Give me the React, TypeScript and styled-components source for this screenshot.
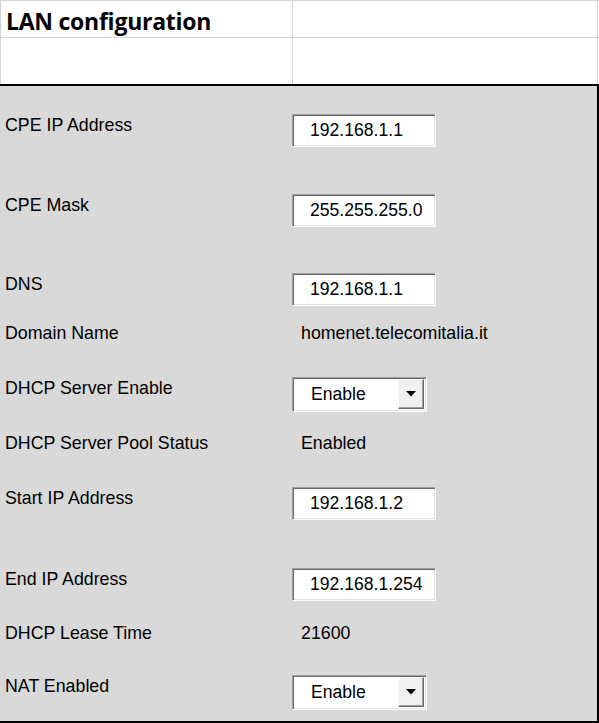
import React from "react";
import styled, { createGlobalStyle } from "styled-components";

const GlobalStyle = createGlobalStyle`
  html, body { margin: 0; padding: 0; background: #ffffff; }
  body { font-family: "Liberation Sans", Arial, sans-serif; }
`;

const Sheet = styled.div`
  width: 599px;
  border-top: 1px solid #d4d4d4;
  box-sizing: border-box;
`;

const HeaderRow = styled.div<{ $h: number; $line?: boolean }>`
  display: grid;
  grid-template-columns: 292px 306px;
  height: ${(p) => p.$h}px;
  box-sizing: border-box;
  border-bottom: ${(p) => (p.$line ? "1px solid #d4d4d4" : "none")};
`;

const HeaderCell = styled.div<{ $first?: boolean }>`
  border-left: 1px solid #d4d4d4;
  border-right: ${(p) => (p.$first ? "none" : "1px solid #d4d4d4")};
  box-sizing: border-box;
  display: flex;
  align-items: flex-end;
  padding-left: 5px;
`;

const Title = styled.h1`
  margin: 0 0 1px 0;
  font-family: "Open Sans", "Liberation Sans", sans-serif;
  font-weight: 700;
  font-size: 23px;
  line-height: 30px;
  color: #000;
  letter-spacing: -0.25px;
`;

const Panel = styled.div`
  background: #d9d9d9;
  border-top: 2px solid #000;
  border-right: 2px solid #000;
  border-bottom: 2px solid #000;
  padding-top: 28px;
  height: 639px;
  box-sizing: border-box;
`;

const FieldRow = styled.div<{ $h: number }>`
  display: grid;
  grid-template-columns: 292px 1fr;
  align-items: start;
  height: ${(p) => p.$h}px;
`;

const Label = styled.div`
  padding: 1px 0 0 5px;
  font-size: 17.8px;
  line-height: 20px;
  color: #000;
  white-space: nowrap;
`;

const Value = styled.div`
  padding: 1px 0 0 9px;
  font-size: 17.8px;
  line-height: 20px;
  color: #000;
  white-space: nowrap;
`;

const TextBox = styled.input`
  display: block;
  width: 144px;
  height: 33px;
  box-sizing: border-box;
  margin: 0;
  padding: 0 0 0 17px;
  background: #fff;
  border-style: solid;
  border-width: 1px;
  border-color: #a0a0a0 #ffffff #ffffff #a0a0a0;
  box-shadow: inset 1px 1px 0 #696969, inset -1px -1px 0 #e3e3e3;
  font-family: "Liberation Sans", Arial, sans-serif;
  font-size: 17.6px;
  color: #000;
  outline: none;
`;

const SelectBox = styled.div`
  display: flex;
  align-items: flex-start;
  width: 135px;
  height: 35px;
  box-sizing: border-box;
  background: #fff;
  border-style: solid;
  border-width: 1px;
  border-color: #a0a0a0 #ffffff #ffffff #a0a0a0;
  box-shadow: inset 1px 1px 0 #696969, inset -1px -1px 0 #e3e3e3;
  padding: 1px 2px 1px 1px;
`;

const SelectText = styled.span`
  flex: 1;
  padding-left: 17px;
  font-size: 17.6px;
  line-height: 31px;
  color: #000;
`;

const ArrowButton = styled.span`
  width: 26px;
  height: 30px;
  box-sizing: border-box;
  background: #f0f0f0;
  border-style: solid;
  border-width: 1px;
  border-color: #ffffff #696969 #696969 #ffffff;
  box-shadow: inset -1px -1px 0 #a0a0a0;
  display: flex;
  align-items: center;
  justify-content: center;
`;

const Select = ({ value }: { value: string }) => (
  <SelectBox>
    <SelectText>{value}</SelectText>
    <ArrowButton>
      <svg width="10" height="6" viewBox="0 0 10 6">
        <polygon points="0,0 10,0 5,5.5" fill="#000" />
      </svg>
    </ArrowButton>
  </SelectBox>
);

type Field = {
  label: string;
  h: number;
  kind: "input" | "text" | "select";
  value: string;
};

const fields: Field[] = [
  { label: "CPE IP Address", h: 80, kind: "input", value: "192.168.1.1" },
  { label: "CPE Mask", h: 79, kind: "input", value: "255.255.255.0" },
  { label: "DNS", h: 49, kind: "input", value: "192.168.1.1" },
  { label: "Domain Name", h: 55, kind: "text", value: "homenet.telecomitalia.it" },
  { label: "DHCP Server Enable", h: 55, kind: "select", value: "Enable" },
  { label: "DHCP Server Pool Status", h: 55, kind: "text", value: "Enabled" },
  { label: "Start IP Address", h: 81, kind: "input", value: "192.168.1.2" },
  { label: "End IP Address", h: 54, kind: "input", value: "192.168.1.254" },
  { label: "DHCP Lease Time", h: 53, kind: "text", value: "21600" },
  { label: "NAT Enabled", h: 46, kind: "select", value: "Enable" },
];

export default function App() {
  return (
    <>
      <GlobalStyle />
      <Sheet>
        <HeaderRow $h={37} $line>
          <HeaderCell $first>
            <Title>LAN configuration</Title>
          </HeaderCell>
          <HeaderCell />
        </HeaderRow>
        <HeaderRow $h={46}>
          <HeaderCell $first />
          <HeaderCell />
        </HeaderRow>
        <Panel>
          {fields.map((f) => (
            <FieldRow key={f.label} $h={f.h}>
              <Label>{f.label}</Label>
              {f.kind === "input" && <TextBox readOnly value={f.value} />}
              {f.kind === "text" && <Value>{f.value}</Value>}
              {f.kind === "select" && <Select value={f.value} />}
            </FieldRow>
          ))}
        </Panel>
      </Sheet>
    </>
  );
}
